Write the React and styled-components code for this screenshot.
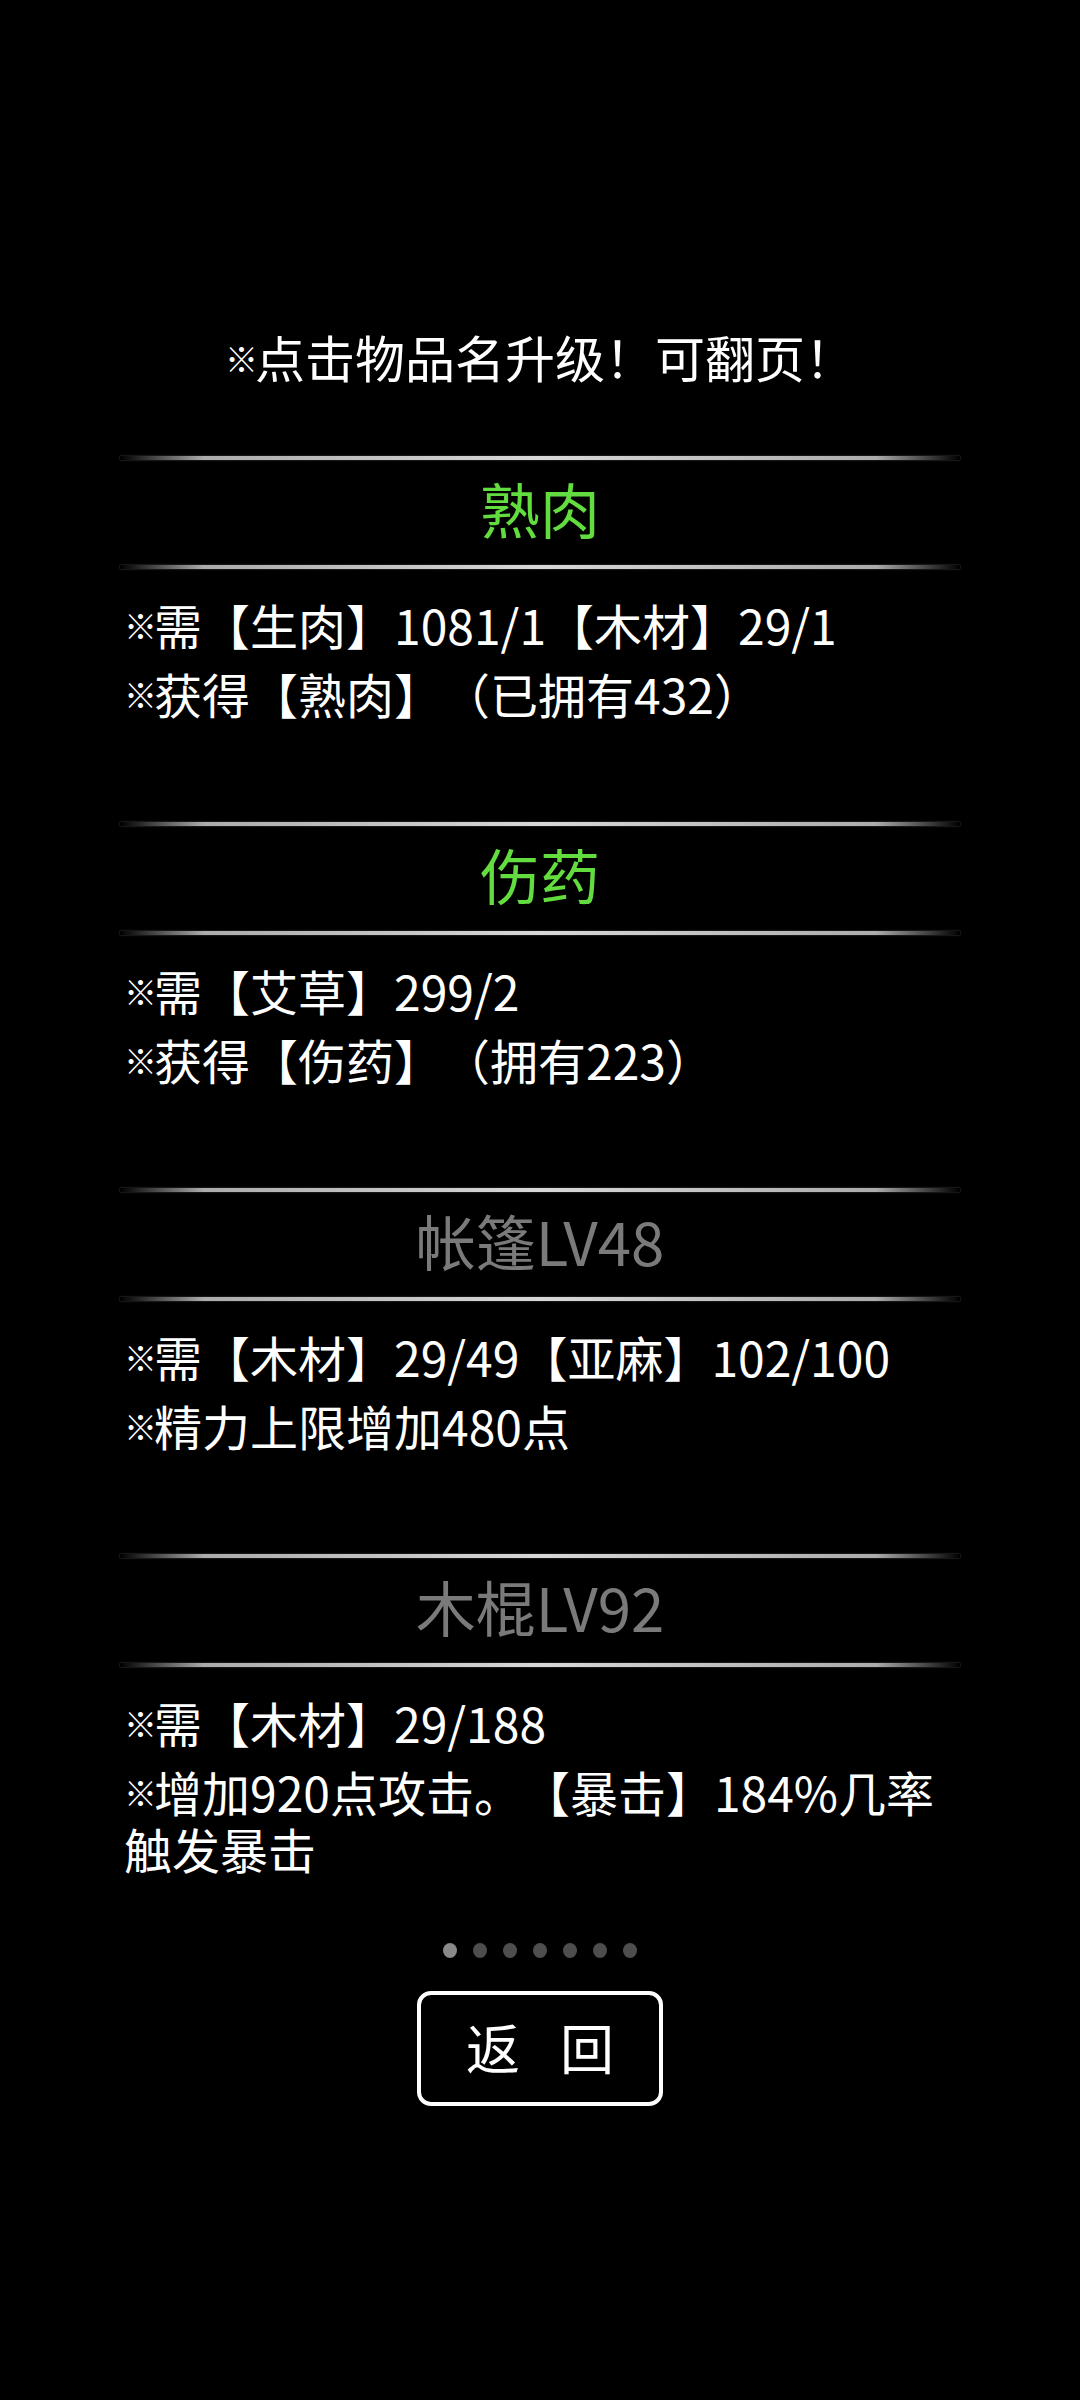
import React from 'react';
import styled, { createGlobalStyle } from 'styled-components';

const GlobalStyle = createGlobalStyle`
  html, body {
    margin: 0;
    padding: 0;
    background: #000;
  }
  body {
    font-family: "Noto Sans CJK SC", "Noto Sans", sans-serif;
    color: #fff;
    text-spacing-trim: space-all;
  }
`;

const Page = styled.div`
  width: 1080px;
  height: 2400px;
  background: #000;
  display: flex;
  flex-direction: column;
  align-items: center;
  padding-top: 326px;
  box-sizing: border-box;
`;

const Hint = styled.div`
  font-size: 50px;
  line-height: 60px;
  color: #fff;
  margin-bottom: 70px;
`;

// the reference mark is drawn smaller than the hanzi around it
const Mark = styled.span`
  font-size: 33px;
  line-height: 0;
  vertical-align: 0.18em;
  margin-right: -3px;
`;

const List = styled.div`
  width: 840px;
  display: flex;
  flex-direction: column;
  gap: 100px;
`;

const Section = styled.div`
  display: flex;
  flex-direction: column;
`;

const Divider = styled.div`
  height: 4px;
  background: linear-gradient(
    to right,
    rgba(255, 255, 255, 0) 0%,
    rgba(190, 190, 190, 0.9) 10%,
    #d8d8d8 50%,
    rgba(190, 190, 190, 0.9) 90%,
    rgba(255, 255, 255, 0) 100%
  );
  box-shadow: 0 0 2px rgba(120, 120, 120, 0.7);
`;

const Name = styled.div`
  height: 105px;
  box-sizing: border-box;
  padding-bottom: 10px;
  display: flex;
  align-items: center;
  justify-content: center;
  font-size: 60px;
  color: ${(p) => (p.$active ? '#62dc3e' : '#7a7a7a')};
  cursor: pointer;
`;

const Body = styled.div`
  padding: 27px 0 0 4px;
  display: flex;
  flex-direction: column;
  gap: 12px;
`;

const Line = styled.div`
  font-size: 48px;
  line-height: 57px;
  color: #fff;
`;

const Dots = styled.div`
  display: flex;
  gap: 16px;
  margin-top: 66px;
`;

const Dot = styled.span`
  width: 14px;
  height: 15px;
  border-radius: 50%;
  background: ${(p) => (p.$current ? '#8a8a8a' : '#4e4e4e')};
`;

const BackButton = styled.button`
  margin-top: 33px;
  width: 246px;
  height: 115px;
  box-sizing: border-box;
  border: 4px solid #fff;
  border-radius: 14px;
  background: #000;
  color: #fff;
  font-family: "Noto Sans CJK SC", sans-serif;
  font-size: 54px;
  display: flex;
  align-items: center;
  justify-content: center;
  gap: 40px;
  padding: 0 0 4px;
  cursor: pointer;
`;

const items = [
  {
    name: '熟肉',
    active: true,
    lines: ['需【生肉】1081/1【木材】29/1', '获得【熟肉】（已拥有432）'],
  },
  {
    name: '伤药',
    active: true,
    lines: ['需【艾草】299/2', '获得【伤药】（拥有223）'],
  },
  {
    name: '帐篷LV48',
    active: false,
    lines: ['需【木材】29/49【亚麻】102/100', '精力上限增加480点'],
  },
  {
    name: '木棍LV92',
    active: false,
    lines: ['需【木材】29/188', '增加920点攻击。【暴击】184%几率触发暴击'],
  },
];

export default function App() {
  return (
    <Page>
      <GlobalStyle />
      <Hint>
        <Mark>※</Mark>点击物品名升级！可翻页！
      </Hint>
      <List>
        {items.map((item) => (
          <Section key={item.name}>
            <Divider />
            <Name $active={item.active}>{item.name}</Name>
            <Divider />
            <Body>
              {item.lines.map((l) => (
                <Line key={l}>
                  <Mark>※</Mark>
                  {l}
                </Line>
              ))}
            </Body>
          </Section>
        ))}
      </List>
      <Dots>
        {[0, 1, 2, 3, 4, 5, 6].map((i) => (
          <Dot key={i} $current={i === 0} />
        ))}
      </Dots>
      <BackButton>
        <span>返</span>
        <span>回</span>
      </BackButton>
    </Page>
  );
}
